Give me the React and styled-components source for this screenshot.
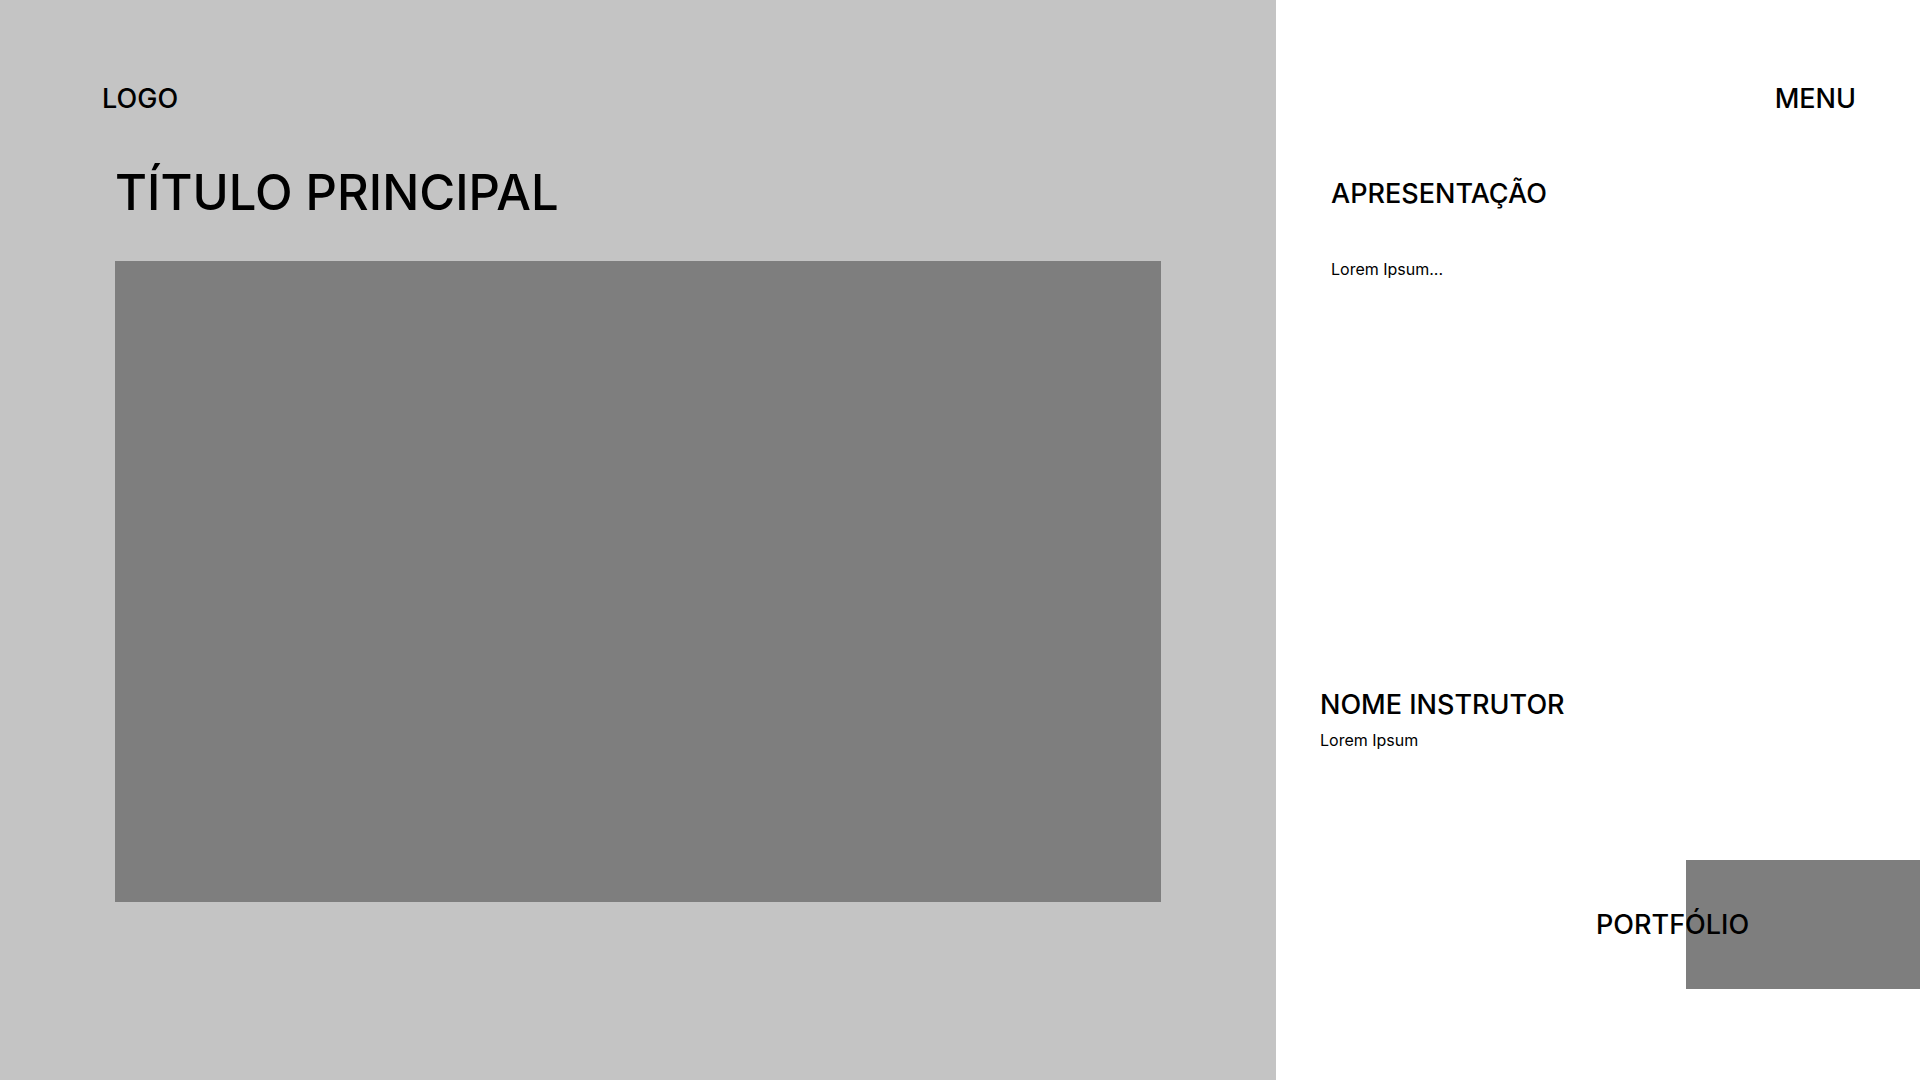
import React from "react";
import styled, { createGlobalStyle } from "styled-components";

const GlobalStyle = createGlobalStyle`
  * { box-sizing: border-box; }
  body {
    margin: 0;
    background: #fff;
    color: #000;
    font-family: Inter, "Liberation Sans", sans-serif;
  }
  h1, h2, p { margin: 0; }
`;

const Page = styled.div`
  display: grid;
  grid-template-columns: 1276fr 644fr;
  min-height: 100vh;
`;

const MainPanel = styled.main`
  background: #c4c4c4;
  padding: 78px 9% 78px 8%;
`;

const Logo = styled.a`
  display: block;
  color: inherit;
  text-decoration: none;
  font-size: 27px;
  font-weight: 500;
  line-height: 42px;
`;

const Feature = styled.section`
  display: flex;
  flex-direction: column;
  gap: 29px;
  padding: 34px 0 0 13px;
`;

const Title = styled.h1`
  font-size: 49px;
  font-weight: 500;
  line-height: 78px;
`;

const Media = styled.div`
  aspect-ratio: 1046 / 641;
  background: #7e7e7e;
`;

const SidePanel = styled.aside`
  display: flex;
  flex-direction: column;
  padding: 78px 0 91px;
`;

const MenuButton = styled.button`
  align-self: flex-end;
  margin-right: 64px;
  padding: 0;
  border: 0;
  background: none;
  color: inherit;
  font: inherit;
  font-size: 27px;
  font-weight: 500;
  line-height: 42px;
  cursor: pointer;
`;

const Block = styled.section`
  display: flex;
  flex-direction: column;
  gap: ${({ $gap }) => $gap}px;
  padding-left: ${({ $indent }) => $indent}px;
`;

const Presentation = styled(Block)`
  flex: 1;
  padding-top: 53px;
`;

const Instructor = styled(Block)`
  padding-bottom: 108px;
`;

const Heading = styled.h2`
  font-size: 27px;
  font-weight: 500;
  line-height: 42px;
`;

const Text = styled.p`
  font-size: 16px;
  line-height: 24px;
`;

const PortfolioLink = styled.a`
  align-self: flex-end;
  display: flex;
  align-items: center;
  width: 234px;
  height: 129px;
  background: #7e7e7e;
  color: inherit;
  text-decoration: none;
`;

const PortfolioLabel = styled.span`
  margin-left: -90px;
  font-size: 27px;
  font-weight: 500;
  line-height: 42px;
`;

export default function App() {
  return (
    <>
      <GlobalStyle />
      <Page>
        <MainPanel>
          <Logo href="#">LOGO</Logo>
          <Feature>
            <Title>TÍTULO PRINCIPAL</Title>
            <Media />
          </Feature>
        </MainPanel>
        <SidePanel>
          <MenuButton type="button">MENU</MenuButton>
          <Presentation $gap={42} $indent={55}>
            <Heading>APRESENTAÇÃO</Heading>
            <Text>Lorem Ipsum...</Text>
          </Presentation>
          <Instructor $gap={2} $indent={44}>
            <Heading>NOME INSTRUTOR</Heading>
            <Text>Lorem Ipsum</Text>
          </Instructor>
          <PortfolioLink href="#portfolio">
            <PortfolioLabel>PORTFÓLIO</PortfolioLabel>
          </PortfolioLink>
        </SidePanel>
      </Page>
    </>
  );
}
